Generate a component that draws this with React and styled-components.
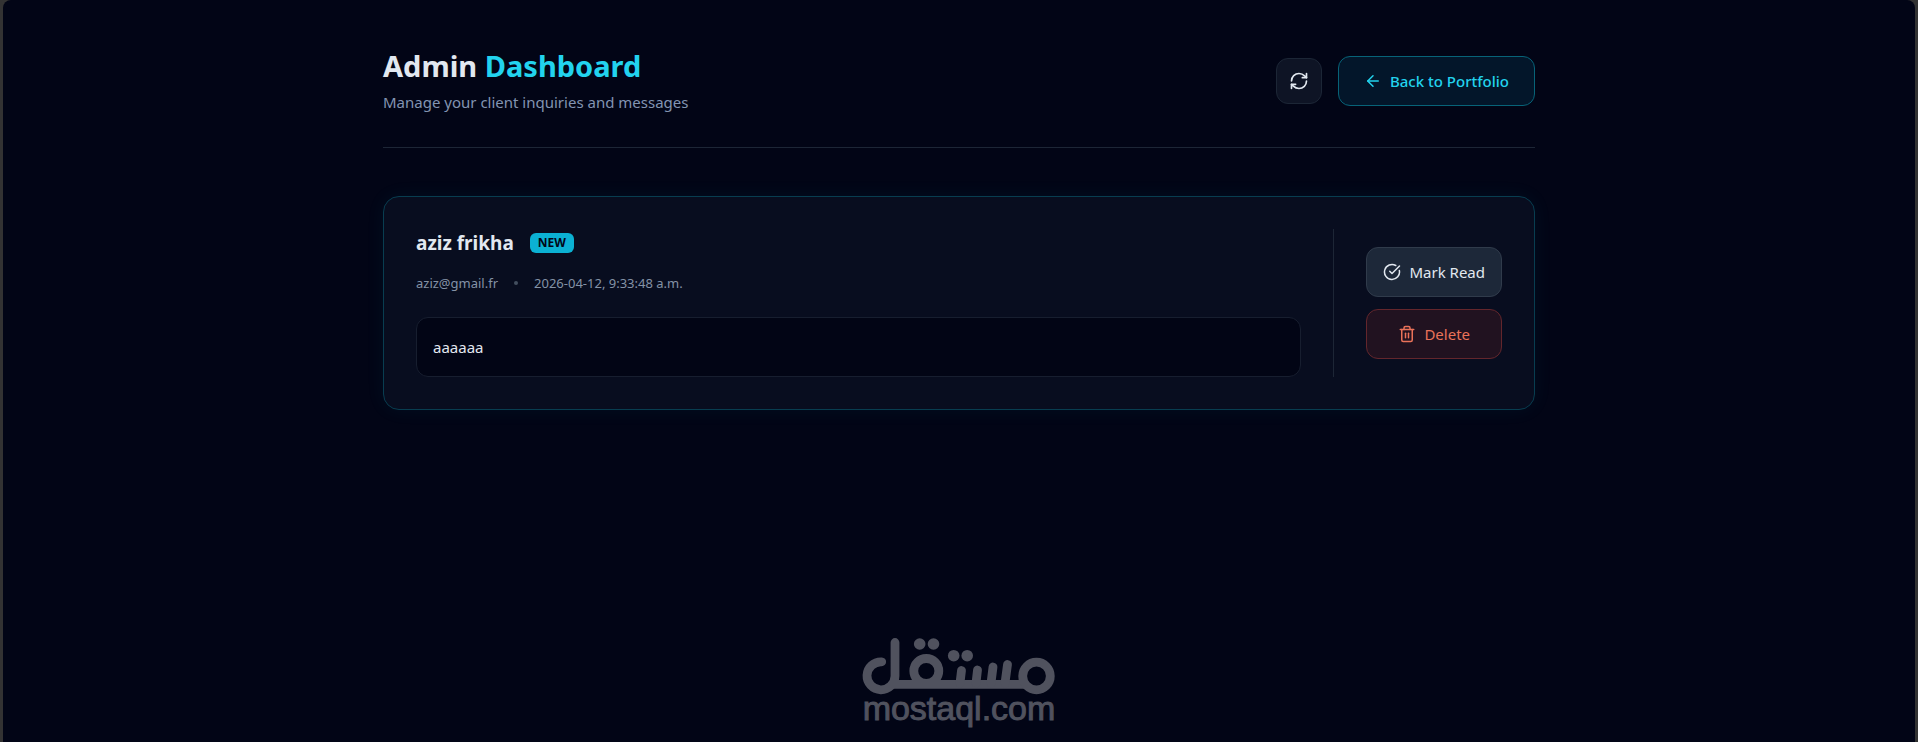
import React from 'react'
import styled, { createGlobalStyle, css } from "styled-components"
import { ArrowLeft, CircleCheckBig, RefreshCw, Trash2 } from "lucide-react"

const messages = [
  {
    id: 1,
    name: "aziz frikha",
    email: "aziz@gmail.fr",
    date: "2026-04-12, 9:33:48 a.m.",
    text: "aaaaaa",
    isNew: true,
  },
]

function Watermark() {
  return (
    <Brand>
      <svg width="194" height="58" viewBox="0 0 194 58" role="img" aria-label="مستقل">
        <g fill="none" stroke="#50525e" strokeWidth="8.800" strokeLinecap="round">
          <path d="M19.700 23.800 A14 14 0 1 0 33 38 V4.500" />
          <circle cx="64.300" cy="33" r="12.500" />
          <path d="M30 46.400 H166" strokeLinecap="butt" />
          <path d="M99.500 32.500 L98 45" />
          <path d="M115.500 32 L114 45" />
          <path d="M131 29 L129 45" />
          <path d="M145.500 26.500 L143 45" />
          <circle cx="174.500" cy="38" r="13.800" />
        </g>
        <g fill="#50525e">
          <circle cx="57.700" cy="6" r="5.800" />
          <circle cx="71.500" cy="6" r="5.800" />
          <circle cx="91.700" cy="17.700" r="5.800" />
          <circle cx="105.200" cy="17.700" r="5.800" />
        </g>
      </svg>
      <span>mostaql.com</span>
    </Brand>
  )
}

function MessageCard({ message }) {
  return (
    <Card $unread={message.isNew}>
      <Details>
        <NameRow>
          <h2>{message.name}</h2>
          {message.isNew && <Badge>NEW</Badge>}
        </NameRow>
        <Meta>
          <span>{message.email}</span>
          <Dot />
          <span>{message.date}</span>
        </Meta>
        <Body>{message.text}</Body>
      </Details>
      <Actions>
        <Button type="button">
          <CircleCheckBig size={18} />
          Mark Read
        </Button>
        <Button type="button" $variant="danger">
          <Trash2 size={18} />
          Delete
        </Button>
      </Actions>
    </Card>
  )
}

function App() {
  return (
    <>
      <GlobalStyle />
      <Page>
        <Container>
          <Header>
            <div>
              <Title>Admin <span>Dashboard</span></Title>
              <Subtitle>Manage your client inquiries and messages</Subtitle>
            </div>
            <HeaderActions>
              <IconButton type="button" aria-label="Refresh">
                <RefreshCw size={20} />
              </IconButton>
              <BackLink href="#">
                <ArrowLeft size={18} />
                Back to Portfolio
              </BackLink>
            </HeaderActions>
          </Header>
          <main>
            {messages.map((message) => (
              <MessageCard key={message.id} message={message} />
            ))}
          </main>
        </Container>
        <Watermark />
      </Page>
    </>
  )
}

export default App


const GlobalStyle = createGlobalStyle`
  * {
    box-sizing: border-box;
    margin: 0;
  }
  body {
    background: #333333;
    color: #e2e8f0;
    font-family: "Segoe UI", "Noto Sans", "Open Sans", sans-serif;
    font-size: 15px;
  }
`

const Page = styled.div`
  display: flex;
  flex-direction: column;
  min-height: 100vh;
  margin: 0 3px;
  padding: 48px 24px 22px;
  border-radius: 8px 8px 0 0;
  background: #020516;
`

const Container = styled.div`
  width: 100%;
  max-width: 1152px;
  margin: 0 auto;
`

const Header = styled.header`
  display: flex;
  align-items: center;
  justify-content: space-between;
  margin-bottom: 48px;
  padding-bottom: 33px;
  border-bottom: 1px solid #1d2636;
`

const Title = styled.h1`
  font-size: 29px;
  font-weight: 700;
  line-height: 36px;

  span {
    color: #22d3ee;
  }
`

const Subtitle = styled.p`
  margin-top: 6px;
  line-height: 24px;
  color: #8294b2;
`

const HeaderActions = styled.div`
  display: flex;
  align-items: center;
  gap: 16px;
`

const IconButton = styled.button`
  display: flex;
  align-items: center;
  justify-content: center;
  width: 46px;
  height: 46px;
  padding: 0;
  border: 1px solid #1c2636;
  border-radius: 12px;
  background: #0e1425;
  color: #e2e8f0;
  cursor: pointer;
`

const BackLink = styled.a`
  display: flex;
  align-items: center;
  justify-content: center;
  gap: 8px;
  min-width: 197px;
  height: 50px;
  padding: 0 24px;
  border: 1px solid #076378;
  border-radius: 12px;
  background: #03162a;
  color: #22d3ee;
  font-weight: 500;
  text-decoration: none;
`

const Card = styled.article`
  display: flex;
  gap: 32px;
  padding: 32px;
  border: 1px solid ${({ $unread }) => ($unread ? "#083d50" : "#1b2433")};
  border-radius: 16px;
  background: #080d1f;
  box-shadow: ${({ $unread }) => ($unread ? "0 0 20px rgba(6, 182, 212, 0.06)" : "none")};
`

const Details = styled.div`
  flex: 1;
  min-width: 0;
`

const NameRow = styled.div`
  display: flex;
  align-items: center;
  gap: 16px;

  h2 {
    font-size: 19px;
    font-weight: 700;
    line-height: 28px;
  }
`

const Badge = styled.span`
  padding: 0 8px;
  border-radius: 6px;
  background: #0bb1d3;
  color: #020617;
  font-size: 12px;
  font-weight: 700;
  line-height: 20px;
`

const Meta = styled.div`
  display: flex;
  align-items: center;
  gap: 16px;
  margin-top: 16px;
  color: #8492a6;
  font-size: 13px;
  line-height: 20px;
`

const Dot = styled.i`
  width: 4px;
  height: 4px;
  border-radius: 50%;
  background: #434e5f;
`

const Body = styled.p`
  margin-top: 24px;
  padding: 16px;
  border: 1px solid #171e2f;
  border-radius: 12px;
  background: #020515;
  line-height: 26px;
`

const Actions = styled.div`
  display: flex;
  flex-direction: column;
  justify-content: center;
  gap: 12px;
  padding-left: 32px;
  border-left: 1px solid #1d2636;
`

const Button = styled.button`
  display: flex;
  align-items: center;
  justify-content: center;
  gap: 8px;
  min-width: 135px;
  height: 50px;
  padding: 0 16px;
  border: 1px solid #303b4b;
  border-radius: 12px;
  background: #1d2839;
  color: #e2e8f0;
  font: inherit;
  cursor: pointer;

  ${({ $variant }) => $variant === "danger" && css`
    border-color: #63262c;
    background: #211220;
    color: #ea7259;
  `}
`

const Brand = styled.footer`
  display: flex;
  flex-direction: column;
  align-items: center;
  margin-top: auto;

  span {
    color: #50525e;
    font-family: "Liberation Sans", Arial, sans-serif;
    font-size: 34px;
    line-height: 24px;
    -webkit-text-stroke: 1px #50525e;
  }
`
